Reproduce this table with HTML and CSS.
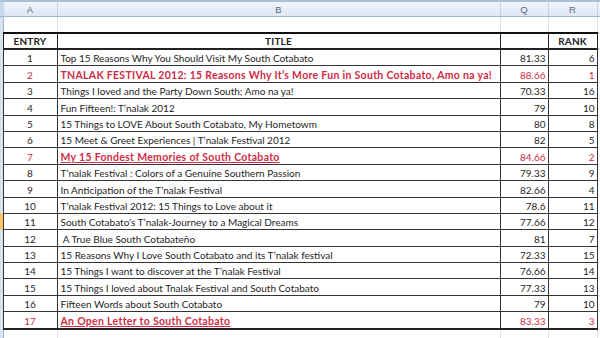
FILE: index.html
```html
<!DOCTYPE html>
<html>
<head>
<meta charset="utf-8">
<link rel="stylesheet" href="styles.css">
</head>
<body>
<table class="sheet">
  <colgroup>
    <col class="c-rh"><col class="c-a"><col class="c-b"><col class="c-q"><col class="c-r"><col class="c-x">
  </colgroup>
  <tr class="colhead">
    <td class="rh"></td><td>A</td><td>B</td><td>Q</td><td>R</td><td></td>
  </tr>
  <tr class="blank">
    <td class="rh"></td><td></td><td></td><td></td><td></td><td></td>
  </tr>
  <tr class="hdr">
    <td class="rh"></td><td class="b">ENTRY</td><td class="b">TITLE</td><td class="b"></td><td class="b">RANK</td><td class="x"></td>
  </tr>
  <tr class="row"><td class="rh"></td><td class="n">1</td><td class="t">Top 15 Reasons Why You Should Visit My South Cotabato</td><td class="s">81.33</td><td class="k">6</td><td class="x"></td></tr>
  <tr class="row red"><td class="rh"></td><td class="n">2</td><td class="t strong">TNALAK FESTIVAL 2012: 15 Reasons Why It’s More Fun in South Cotabato, Amo na ya!</td><td class="s">88.66</td><td class="k">1</td><td class="x"></td></tr>
  <tr class="row"><td class="rh"></td><td class="n">3</td><td class="t">Things I loved and the Party Down South; Amo na ya!</td><td class="s">70.33</td><td class="k">16</td><td class="x"></td></tr>
  <tr class="row"><td class="rh"></td><td class="n">4</td><td class="t">Fun Fifteen!: T’nalak 2012</td><td class="s">79</td><td class="k">10</td><td class="x"></td></tr>
  <tr class="row"><td class="rh"></td><td class="n">5</td><td class="t">15 Things to LOVE About South Cotabato, My Hometowm</td><td class="s">80</td><td class="k">8</td><td class="x"></td></tr>
  <tr class="row"><td class="rh"></td><td class="n">6</td><td class="t">15 Meet &amp; Greet Experiences | T’nalak Festival 2012</td><td class="s">82</td><td class="k">5</td><td class="x"></td></tr>
  <tr class="row red"><td class="rh"></td><td class="n">7</td><td class="t strong link">My 15 Fondest Memories of South Cotabato</td><td class="s">84.66</td><td class="k">2</td><td class="x"></td></tr>
  <tr class="row"><td class="rh"></td><td class="n">8</td><td class="t">T’nalak Festival : Colors of a Genuine Southern Passion</td><td class="s">79.33</td><td class="k">9</td><td class="x"></td></tr>
  <tr class="row"><td class="rh"></td><td class="n">9</td><td class="t">In Anticipation of the T’nalak Festival</td><td class="s">82.66</td><td class="k">4</td><td class="x"></td></tr>
  <tr class="row"><td class="rh"></td><td class="n">10</td><td class="t">T’nalak Festival 2012: 15 Things to Love about it</td><td class="s">78.6</td><td class="k">11</td><td class="x"></td></tr>
  <tr class="row"><td class="rh sel"></td><td class="n">11</td><td class="t">South Cotabato’s T’nalak-Journey to a Magical Dreams</td><td class="s">77.66</td><td class="k">12</td><td class="x"></td></tr>
  <tr class="row"><td class="rh"></td><td class="n">12</td><td class="t">&nbsp;A True Blue South Cotabateño</td><td class="s">81</td><td class="k">7</td><td class="x"></td></tr>
  <tr class="row"><td class="rh"></td><td class="n">13</td><td class="t">15 Reasons Why I Love South Cotabato and its T’nalak festival</td><td class="s">72.33</td><td class="k">15</td><td class="x"></td></tr>
  <tr class="row"><td class="rh"></td><td class="n">14</td><td class="t">15 Things I want to discover at the T’nalak Festival</td><td class="s">76.66</td><td class="k">14</td><td class="x"></td></tr>
  <tr class="row"><td class="rh"></td><td class="n">15</td><td class="t">15 Things I loved about Tnalak Festival and South Cotabato</td><td class="s">77.33</td><td class="k">13</td><td class="x"></td></tr>
  <tr class="row"><td class="rh"></td><td class="n">16</td><td class="t">Fifteen Words about South Cotabato</td><td class="s">79</td><td class="k">10</td><td class="x"></td></tr>
  <tr class="row red last"><td class="rh"></td><td class="n">17</td><td class="t strong link">An Open Letter to South Cotabato</td><td class="s">83.33</td><td class="k">3</td><td class="x"></td></tr>
  <tr class="blank tail">
    <td class="rh"></td><td></td><td></td><td></td><td></td><td></td>
  </tr>
</table>
</body>
</html>
```
FILE: styles.css
```css
html, body {
  margin: 0;
  padding: 0;
  background: #ffffff;
  overflow: hidden;
}

.sheet {
  border-collapse: collapse;
  table-layout: fixed;
  width: 600px;
  font-family: "Lato", "Open Sans", sans-serif;
  font-size: 10px;
  color: #262626;
}

.c-rh { width: 3px; }
.c-a { width: 54px; }
.c-b { width: 443px; }
.c-q { width: 48px; }
.c-r { width: 49px; }
.c-x { width: 3px; }

.sheet td {
  padding: 0;
  white-space: nowrap;
  overflow: hidden;
}

.rh {
  background: #d6e3f3;
  border-right: 1px solid #9eb6ce;
}
.rh.sel {
  background: #f9c66b;
}

/* column letters */
.colhead td {
  height: 14px;
  background: linear-gradient(#f1f5fb, #dde7f3);
  border-top: 2px solid #a9c0da;
  border-bottom: 1px solid #9eb6ce;
  border-right: 1px solid #c5d3e4;
  text-align: center;
  font-family: "Liberation Sans", sans-serif;
  font-size: 9.5px;
  color: #5d6a7a;
  vertical-align: middle;
}
.colhead td.rh {
  background: #c9d9ee;
}

.blank td {
  height: 15px;
  border-right: 1px solid #dde3ec;
  border-bottom: 1px solid #dde3ec;
}
.blank td.rh {
  border-right: 1px solid #9eb6ce;
}

.hdr td {
  height: 14px;
  border-top: 2px solid #111;
  border-bottom: 2px solid #222;
  border-left: 1px solid #222;
  border-right: 1px solid #222;
  text-align: center;
  vertical-align: middle;
}
.hdr td.b {
  font-weight: bold;
  font-size: 10px;
  letter-spacing: 0.2px;
  color: #222;
}
.hdr td.rh,
.row td.rh {
  border-top: none;
  border-bottom: none;
  border-left: none;
}

.row td {
  height: 15.4px;
  border: 1px solid #333;
  vertical-align: bottom;
  line-height: 14px;
}
.row td.x,
.hdr td.x {
  border-right: none;
  border-top-color: #dde3ec;
  border-bottom-color: #dde3ec;
}
.row.last td {
  border-bottom: 2px solid #222;
}
.row.last td.x {
  border-bottom: 1px solid #dde3ec;
}
.row.last td.rh {
  border-bottom: none;
}

.n {
  text-align: center;
}
.t {
  padding-left: 3px !important;
  text-align: left;
}
.s, .k {
  text-align: right;
  padding-right: 2px !important;
}

.red td {
  color: #cf2c45;
}
.strong {
  font-weight: bold;
  font-size: 10.5px;
  letter-spacing: 0.3px;
}
.link {
  text-decoration: underline;
}
.tail td {
  height: 12px;
}
```
